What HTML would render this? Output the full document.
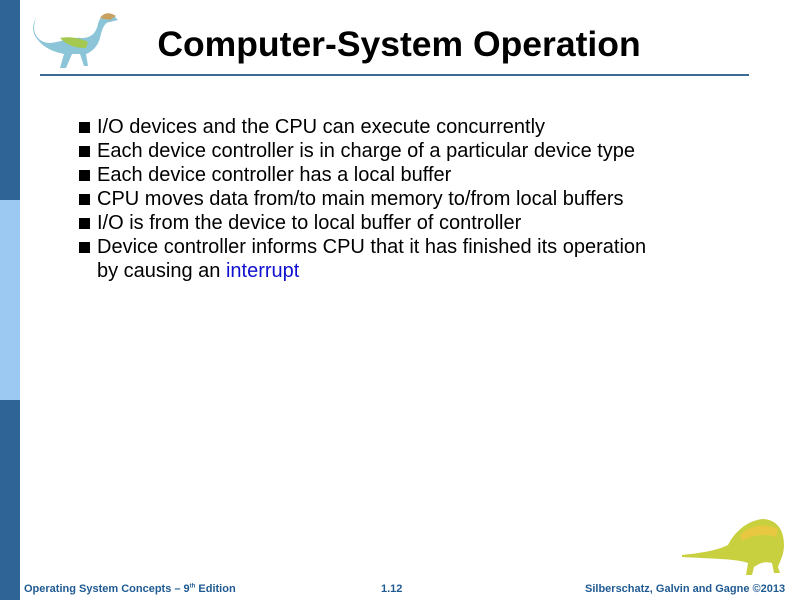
<!DOCTYPE html>
<html><head><style>
body{margin:0;width:800px;height:600px;position:relative;background:#fff;font-family:"Liberation Sans",sans-serif;overflow:hidden}
.bar{position:absolute;left:0;width:20px;background:#2e6496}
.t{position:absolute;left:0;width:798px;top:24px;text-align:center;font-weight:bold;font-size:35.5px}
.line{position:absolute;left:40px;top:74px;width:709px;height:2px;background:#3d6a92}
ul{position:absolute;left:79px;top:115px;margin:0;padding:0;list-style:none;font-size:20px;line-height:24px;color:#000}
li{position:relative;padding-left:18px}
li:before{content:"";position:absolute;left:0;top:7px;width:11px;height:11px;background:#000}
.f{position:absolute;top:583px;font-size:11px;font-weight:bold;color:#1f5a92}
</style></head><body>
<div class="bar" style="top:0;height:200px"></div>
<div class="bar" style="top:200px;height:200px;background:#9cc9f2"></div>
<div class="bar" style="top:400px;height:200px"></div>
<svg style="position:absolute;left:30px;top:8px" width="92" height="64" viewBox="0 0 92 64">
<path d="M6 10 C2 20,4 30,14 34 C24 38,38 28,52 30 C60 30,66 26,68 16 C70 8,76 4,84 8 L88 12 L80 14 C74 14,72 22,70 30 C68 38,62 44,56 46 L58 58 L54 58 L50 46 L42 46 L36 60 L30 60 L34 46 C24 44,14 40,8 32 C2 26,2 16,6 10Z" fill="#8cc4d8"/>
<path d="M30 30 C40 28,50 30,58 34 L56 40 C46 40,38 38,30 30Z" fill="#a4c850"/>
<path d="M70 10 C74 4,80 4,86 8 L80 12 Z" fill="#c8a060"/>
</svg>
<div class="t">Computer-System Operation</div>
<div class="line"></div>
<ul>
<li>I/O devices and the CPU can execute concurrently</li>
<li>Each device controller is in charge of a particular device type</li>
<li>Each device controller has a local buffer</li>
<li>CPU moves data from/to main memory to/from local buffers</li>
<li>I/O is from the device to local buffer of controller</li>
<li>Device controller informs CPU that it has finished its operation<br>by causing an <span style="color:#1010d0">interrupt</span></li>
</ul>
<svg style="position:absolute;left:680px;top:515px" width="110" height="62" viewBox="0 0 110 62">
<path d="M2 40 C20 38,36 36,48 30 C54 18,66 6,82 4 C96 4,104 14,104 30 C104 40,100 46,98 52 L100 58 L94 58 L92 48 C84 46,80 48,74 52 L72 60 L66 60 L68 48 C56 44,40 44,2 42Z" fill="#c8d040"/>
<path d="M60 20 C70 10,86 8,98 14 L96 22 C84 18,72 20,62 26Z" fill="#e8c840"/>
</svg>
<div class="f" style="left:24px">Operating System Concepts – 9<sup style="font-size:6px">th</sup> Edition</div>
<div class="f" style="left:381px">1.12</div>
<div class="f" style="left:585px">Silberschatz, Galvin and Gagne ©2013</div>
</body></html>
